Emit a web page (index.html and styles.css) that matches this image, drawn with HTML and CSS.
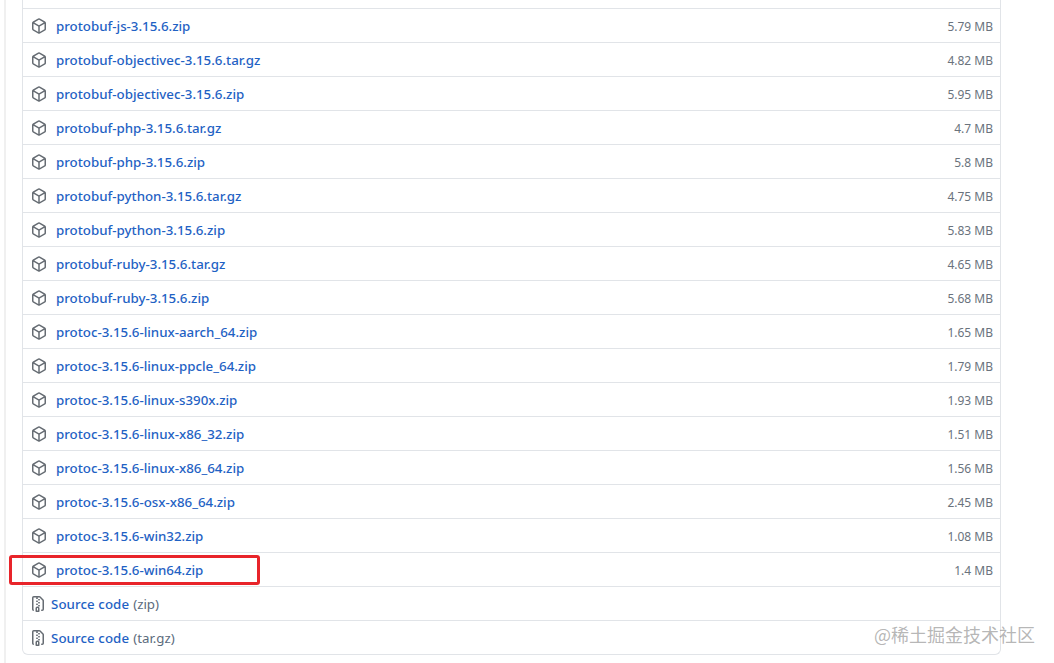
FILE: index.html
```html
<!DOCTYPE html>
<html lang="en">
<head>
<meta charset="utf-8">
<title>Assets</title>
<link rel="stylesheet" href="styles.css">
</head>
<body>
<svg class="defs" width="0" height="0" aria-hidden="true">
  <symbol id="pkg" viewBox="0 0 16 16"><path fill-rule="evenodd" d="M8.878.392a1.75 1.75 0 00-1.756 0l-5.25 3.045A1.75 1.75 0 001 4.951v6.098c0 .624.332 1.2.872 1.514l5.25 3.045a1.75 1.75 0 001.756 0l5.25-3.045c.54-.313.872-.89.872-1.514V4.951c0-.624-.332-1.2-.872-1.514L8.878.392zM7.875 1.69a.25.25 0 01.25 0l4.63 2.685L8 7.133 3.245 4.375l4.63-2.685zM2.5 5.677v5.372c0 .09.047.171.125.216l4.625 2.683V8.432L2.5 5.677zm6.25 8.271l4.625-2.683a.25.25 0 00.125-.216V5.677L8.75 8.432v5.516z"/></symbol>
  <symbol id="zip" viewBox="0 0 16 16"><path fill-rule="evenodd" d="M3.5 1.75a.25.25 0 01.25-.25h3a.75.75 0 000 1.5h.5a.75.75 0 000-1.5h2.086a.25.25 0 01.177.073l2.914 2.914a.25.25 0 01.073.177v8.586a.25.25 0 01-.25.25h-.5a.75.75 0 000 1.5h.5A1.75 1.75 0 0014 13.25V4.664c0-.464-.184-.909-.513-1.237L10.573.513A1.75 1.75 0 009.336 0H3.75A1.75 1.75 0 002 1.75v11.5c0 .649.353 1.214.874 1.515a.75.75 0 10.752-1.298.25.25 0 01-.126-.217V1.75zM8.75 3a.75.75 0 000 1.5h.5a.75.75 0 000-1.5h-.5zM6 5.25a.75.75 0 01.75-.75h.5a.75.75 0 010 1.5h-.5A.75.75 0 016 5.25zm2 1.5A.75.75 0 018.75 6h.5a.75.75 0 010 1.5h-.5A.75.75 0 018 6.75zm-1.25.75a.75.75 0 000 1.5h.5a.75.75 0 000-1.5h-.5zM8 9.75A.75.75 0 018.75 9h.5a.75.75 0 010 1.5h-.5A.75.75 0 018 9.75zm-.75.75a1.75 1.75 0 00-1.75 1.75v3c0 .414.336.75.75.75h2.5a.75.75 0 00.75-.75v-3a1.75 1.75 0 00-1.75-1.75h-.5zM7 12.25a.25.25 0 01.25-.25h.5a.25.25 0 01.25.25v2.25H7v-2.25z"/></symbol>
</svg>
<main class="page">
  <ul class="assets">
    <li class="row stub"></li>
    <li class="row"><svg class="icon"><use href="#pkg"/></svg><a class="name" href="#">protobuf-js-3.15.6.zip</a><span class="size">5.79 MB</span></li>
    <li class="row"><svg class="icon"><use href="#pkg"/></svg><a class="name" href="#">protobuf-objectivec-3.15.6.tar.gz</a><span class="size">4.82 MB</span></li>
    <li class="row"><svg class="icon"><use href="#pkg"/></svg><a class="name" href="#">protobuf-objectivec-3.15.6.zip</a><span class="size">5.95 MB</span></li>
    <li class="row"><svg class="icon"><use href="#pkg"/></svg><a class="name" href="#">protobuf-php-3.15.6.tar.gz</a><span class="size">4.7 MB</span></li>
    <li class="row"><svg class="icon"><use href="#pkg"/></svg><a class="name" href="#">protobuf-php-3.15.6.zip</a><span class="size">5.8 MB</span></li>
    <li class="row"><svg class="icon"><use href="#pkg"/></svg><a class="name" href="#">protobuf-python-3.15.6.tar.gz</a><span class="size">4.75 MB</span></li>
    <li class="row"><svg class="icon"><use href="#pkg"/></svg><a class="name" href="#">protobuf-python-3.15.6.zip</a><span class="size">5.83 MB</span></li>
    <li class="row"><svg class="icon"><use href="#pkg"/></svg><a class="name" href="#">protobuf-ruby-3.15.6.tar.gz</a><span class="size">4.65 MB</span></li>
    <li class="row"><svg class="icon"><use href="#pkg"/></svg><a class="name" href="#">protobuf-ruby-3.15.6.zip</a><span class="size">5.68 MB</span></li>
    <li class="row"><svg class="icon"><use href="#pkg"/></svg><a class="name" href="#">protoc-3.15.6-linux-aarch_64.zip</a><span class="size">1.65 MB</span></li>
    <li class="row"><svg class="icon"><use href="#pkg"/></svg><a class="name" href="#">protoc-3.15.6-linux-ppcle_64.zip</a><span class="size">1.79 MB</span></li>
    <li class="row"><svg class="icon"><use href="#pkg"/></svg><a class="name" href="#">protoc-3.15.6-linux-s390x.zip</a><span class="size">1.93 MB</span></li>
    <li class="row"><svg class="icon"><use href="#pkg"/></svg><a class="name" href="#">protoc-3.15.6-linux-x86_32.zip</a><span class="size">1.51 MB</span></li>
    <li class="row"><svg class="icon"><use href="#pkg"/></svg><a class="name" href="#">protoc-3.15.6-linux-x86_64.zip</a><span class="size">1.56 MB</span></li>
    <li class="row"><svg class="icon"><use href="#pkg"/></svg><a class="name" href="#">protoc-3.15.6-osx-x86_64.zip</a><span class="size">2.45 MB</span></li>
    <li class="row"><svg class="icon"><use href="#pkg"/></svg><a class="name" href="#">protoc-3.15.6-win32.zip</a><span class="size">1.08 MB</span></li>
    <li class="row marked"><svg class="icon"><use href="#pkg"/></svg><a class="name" href="#">protoc-3.15.6-win64.zip</a><span class="size">1.4 MB</span></li>
    <li class="row source"><svg class="icon icon-zip"><use href="#zip"/></svg><a class="name" href="#">Source code</a><span class="kind">(zip)</span></li>
    <li class="row source"><svg class="icon icon-zip"><use href="#zip"/></svg><a class="name" href="#">Source code</a><span class="kind">(tar.gz)</span></li>
  </ul>
</main>
<div class="watermark">@稀土掘金技术社区</div>
</body>
</html>
```
FILE: styles.css
```css
html, body {
  margin: 0;
  padding: 0;
  height: 663px;
  overflow: hidden;
  background: #fff;
}
body {
  font-family: "Noto Sans", "Liberation Sans", sans-serif;
  font-size: 13.3px;
  color: #24292e;
}
.defs {
  display: block;
}
.page {
  margin-left: 4px;
  padding-left: 16px;
  border-left: 2px solid #f0f0f0;
  width: 979px;
  height: 663px;
}
.assets {
  list-style: none;
  margin: 0;
  padding: 0;
  border-left: 1px solid #e1e4e8;
  border-right: 1px solid #e1e4e8;
  border-bottom: 1px solid #e1e4e8;
  border-radius: 0 0 6px 6px;
}
.row {
  position: relative;
  display: flex;
  align-items: center;
  height: 34px;
  box-sizing: border-box;
  padding: 0 7px 0 8px;
  border-bottom: 1px solid #e1e4e8;
}
.row:last-child {
  border-bottom: 0;
  height: 33px;
}
.stub {
  height: 9px;
}
.icon {
  width: 16px;
  height: 16px;
  flex: none;
  fill: #666c73;
  margin-right: 9px;
}
.icon-zip {
  margin-right: 5px;
  margin-left: -1px;
}
.name {
  color: #1f62c4;
  font-weight: 500;
  text-decoration: none;
}
.source .name {
  letter-spacing: 0.08px;
}
.size {
  margin-left: auto;
  padding-top: 1px;
  font-size: 12px;
  color: #6a737d;
}
.kind {
  margin-left: 4px;
  color: #5b6b7c;
}
.marked::after {
  content: "";
  position: absolute;
  left: -14px;
  top: 2px;
  box-sizing: border-box;
  width: 251px;
  height: 30px;
  border: 3px solid #e8242a;
  border-radius: 3px;
}
.watermark {
  position: absolute;
  left: 874px;
  top: 624px;
  font-family: "Noto Sans CJK SC", sans-serif;
  font-size: 18px;
  line-height: 20px;
  color: rgba(120, 120, 120, 0.55);
  white-space: nowrap;
}
```
